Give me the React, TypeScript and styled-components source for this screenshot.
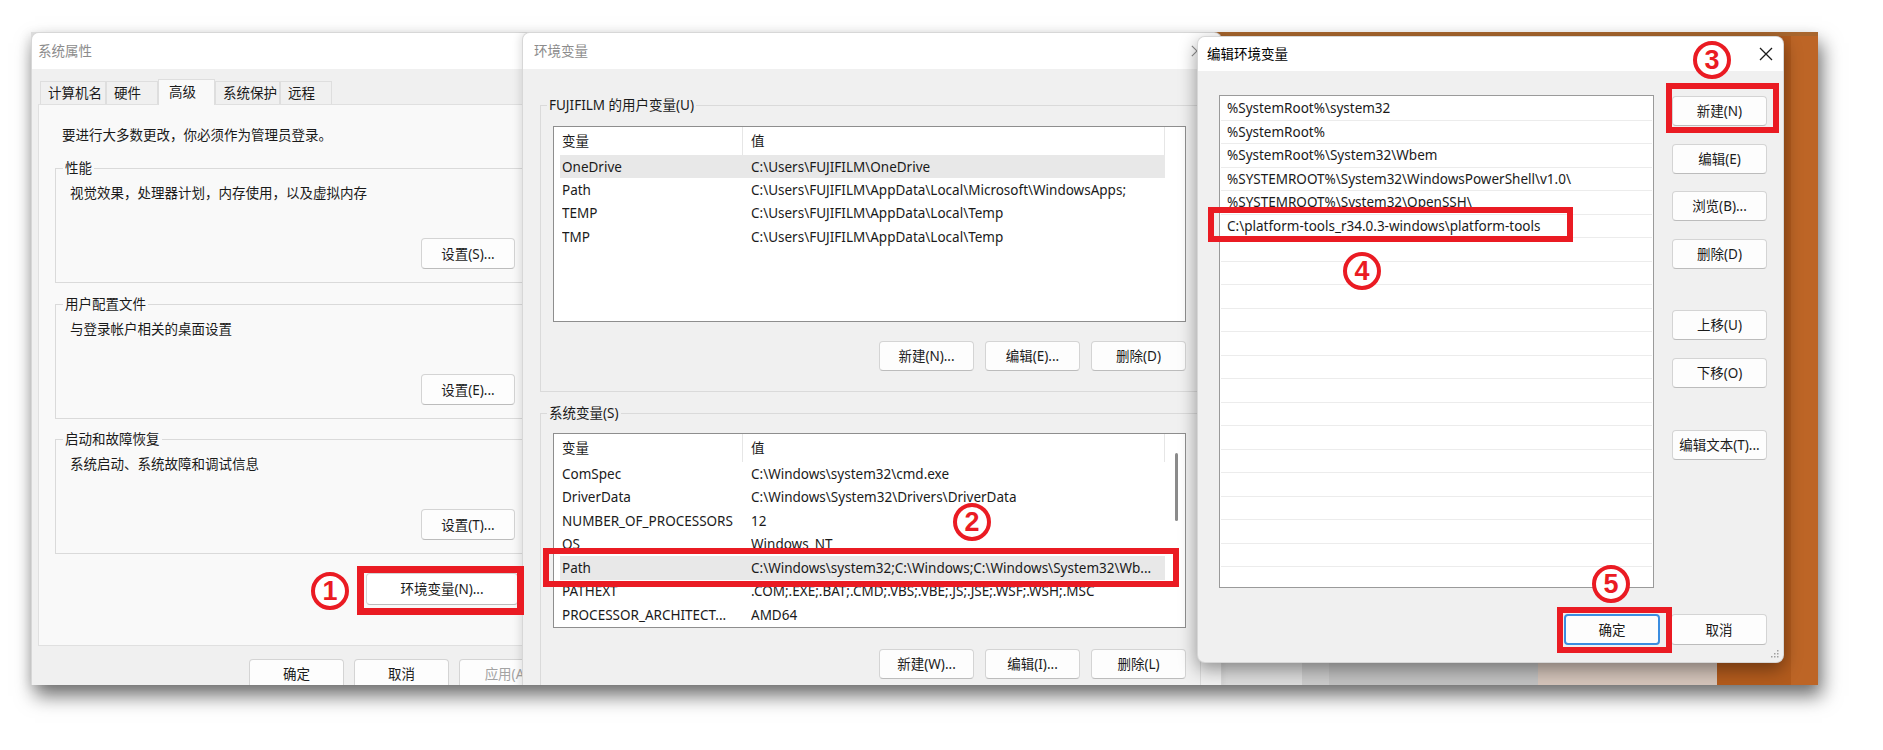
import React from "react";
import styled, { createGlobalStyle } from "styled-components";

const RED = "#ea1b23";

const GlobalStyle = createGlobalStyle`
  *, *::before, *::after { box-sizing: border-box; }
  html, body { margin: 0; padding: 0; background: #ffffff; overflow: hidden; }
  body { font-family: "Noto Sans", "Noto Sans CJK SC", sans-serif; }
`;

const Page = styled.div`
  width: 1883px;
  height: 750px;
  padding: 32px 0 0 31px;
  background: #ffffff;
`;

const Shot = styled.div`
  position: relative;
  width: 1787px;
  height: 653px;
  overflow: hidden;
  font-family: "Noto Sans", "Noto Sans CJK SC", sans-serif;
  font-size: 13.5px;
  line-height: 20px;
  color: #1a1a1a;
  background:
    linear-gradient(180deg, #a8662e 0 4px, transparent 4px) 1166px 0 / 621px 100% no-repeat,
    linear-gradient(90deg, #dcdcdc 0 1271px, #cbcbcb 1271px 1298px, #c1c1c1 1298px 1507px,
      #d4c4ba 1507px 1686px, #b25b1d 1686px 1760px, #bd6526 1760px);
  box-shadow: 4px 11px 18px rgba(0, 0, 0, 0.55), -3px 2px 10px rgba(0, 0, 0, 0.08);
`;

/* windows sit on the desktop canvas */
const Window = styled.div<{ $left: number; $top: number; $width: number; $height: number; $shadow: string }>`
  position: absolute;
  left: ${p => p.$left}px;
  top: ${p => p.$top}px;
  width: ${p => p.$width}px;
  height: ${p => p.$height}px;
  display: flex;
  flex-direction: column;
  background: #f0f0f0;
  border: 1px solid rgba(0, 0, 0, 0.1);
  border-radius: 8px;
  overflow: hidden;
  box-shadow: ${p => p.$shadow};
`;

const TitleBar = styled.div<{ $h: number; $pl: number; $pr?: number; $active?: boolean }>`
  flex: none;
  height: ${p => p.$h}px;
  display: flex;
  align-items: center;
  justify-content: space-between;
  padding: 0 ${p => p.$pr ?? 0}px 0 ${p => p.$pl}px;
  background: #ffffff;
  color: ${p => (p.$active ? "#000000" : "#8c8c8c")};
  font-size: 13.5px;
`;

const Btn = styled.button<{ $w: number; $h?: number; $primary?: boolean; $muted?: boolean; $light?: boolean }>`
  flex: none;
  width: ${p => p.$w}px;
  height: ${p => p.$h ?? 30}px;
  padding: 0;
  font: inherit;
  font-size: 13.5px;
  color: ${p => (p.$muted ? "#a3a3a3" : "#1b1b1b")};
  background: ${p => (p.$light ? "#ffffff" : "#fdfdfd")};
  border: 1px solid #d4d4d4;
  border-bottom-color: #bcbcbc;
  border-radius: 4px;
  ${p => p.$primary && `border: 2px solid #3b8de0;`}
`;

/* ---------- System properties ---------- */
const SysBody = styled.div`
  display: flex;
  flex-direction: column;
  padding: 9px 0 0 6px;
`;

const TabStrip = styled.div`
  display: flex;
  align-items: flex-end;
  height: 26px;
  margin-left: 2px;
`;

const Tab = styled.div<{ $w: number; $selected?: boolean }>`
  width: ${p => p.$w}px;
  height: ${p => (p.$selected ? 26 : 23)}px;
  padding-left: ${p => (p.$selected ? 10 : 7)}px;
  display: flex;
  align-items: ${p => (p.$selected ? "flex-start" : "center")};
  padding-top: ${p => (p.$selected ? 2 : 0)}px;
  background: ${p => (p.$selected ? "#f9f9f9" : "#f0f0f0")};
  border: 1px solid #dedede;
  border-bottom: none;
  margin-bottom: ${p => (p.$selected ? -1 : 0)}px;
  position: relative;
  z-index: ${p => (p.$selected ? 1 : 0)};
`;

const Panel = styled.div`
  width: 528px;
  height: 542px;
  display: flex;
  flex-direction: column;
  padding: 20px 0 0 16px;
  background: #f9f9f9;
  border: 1px solid #e0e0e0;
`;

const Notice = styled.div`
  margin-left: 7px;
  height: 20px;
`;

const Group = styled.fieldset<{ $w: number; $h: number; $mt?: number; $pl?: number }>`
  flex: none;
  width: ${p => p.$w}px;
  height: ${p => p.$h}px;
  margin: ${p => p.$mt ?? 0}px 0 0 0;
  padding: 0 17px 0 ${p => p.$pl ?? 14}px;
  min-width: 0;
  display: flex;
  flex-direction: column;
  border: 1px solid #dadada;
`;

const GroupLabel = styled.legend<{ $ml: number }>`
  padding: 0 2px;
  margin-left: ${p => p.$ml}px;
  line-height: 18px;
  font-size: 13.5px;
`;

const GroupText = styled.div`
  margin-top: 6px;
  height: 20px;
`;

const GroupAction = styled.div`
  margin-top: 35px;
  display: flex;
  justify-content: flex-end;
`;

const EnvButtonRow = styled.div`
  margin: 19px 0 0 311px;
`;

const DialogButtons = styled.div<{ $ml: number; $mt: number }>`
  display: flex;
  gap: 10px;
  margin: ${p => p.$mt}px 0 0 ${p => p.$ml}px;
`;

/* ---------- Environment variables ---------- */
const EnvBody = styled.div`
  display: flex;
  flex-direction: column;
  padding: 27px 0 0 17px;
`;

const ListBox = styled.div<{ $h: number; $mt: number }>`
  flex: none;
  display: flex;
  width: 633px;
  height: ${p => p.$h}px;
  margin-top: ${p => p.$mt}px;
  background: #ffffff;
  border: 1px solid #8e8e8e;
  overflow: hidden;
`;

const ListMain = styled.div`
  width: 611px;
  display: flex;
  flex-direction: column;
`;

const ListHead = styled.div`
  flex: none;
  display: grid;
  grid-template-columns: 189px 422px;
  height: 28px;
`;

const HeadCell = styled.div`
  display: flex;
  align-items: center;
  padding-left: 8px;
  border-right: 1px solid #e6e6e6;
`;

const ListRow = styled.div<{ $h: number; $selected?: boolean }>`
  flex: none;
  display: grid;
  grid-template-columns: 189px 1fr;
  align-items: center;
  height: ${p => p.$h}px;
  margin-left: 6px;
  padding-left: 2px;
  white-space: nowrap;
  overflow: hidden;
  background: ${p => (p.$selected ? "#e8e8e8" : "transparent")};
`;

const Cell = styled.span`
  overflow: hidden;
`;

const ScrollCol = styled.div`
  flex: 1;
  padding: 19px 0 0 10px;
`;

const ScrollThumb = styled.div`
  width: 3px;
  height: 68px;
  background: #8b8b8b;
  border-radius: 2px;
`;

const ListButtons = styled.div<{ $mt: number }>`
  display: flex;
  gap: 11px;
  width: 633px;
  justify-content: flex-end;
  margin-top: ${p => p.$mt}px;
`;

/* ---------- Edit variable ---------- */
const EditBody = styled.div`
  display: flex;
  flex-direction: column;
  padding: 24px 16px 0 21px;
`;

const EditMain = styled.div`
  display: flex;
  gap: 18px;
`;

const PathList = styled.div`
  width: 437px;
  height: 493px;
  padding: 1px 1px 0;
  background: #ffffff;
  border: 1px solid #9a9a9a;
  overflow: hidden;
`;

const PathRow = styled.div`
  height: 23.5px;
  display: flex;
  align-items: center;
  padding-left: 6px;
  border-bottom: 1px solid #ececec;
  white-space: nowrap;
`;

const SideButtons = styled.div`
  display: flex;
  flex-direction: column;
  gap: 17.6px;
  margin-top: 1px;
`;

const Spacer = styled.div<{ $h: number }>`
  height: ${p => p.$h}px;
  margin-top: -17.6px;
`;

const EditFooter = styled.div`
  display: flex;
  justify-content: flex-end;
  gap: 11px;
  margin-top: 26px;
`;

const Grip = styled.svg`
  position: absolute;
  right: 4px;
  bottom: 4px;
`;

/* ---------- annotations ---------- */
const Highlight = styled.div<{ $x: number; $y: number; $w: number; $h: number; $t: number }>`
  position: absolute;
  left: ${p => p.$x}px;
  top: ${p => p.$y}px;
  width: ${p => p.$w}px;
  height: ${p => p.$h}px;
  border: ${p => p.$t}px solid ${RED};
  pointer-events: none;
`;

const Marker = styled.div<{ $x: number; $y: number }>`
  position: absolute;
  left: ${p => p.$x - 19}px;
  top: ${p => p.$y - 19}px;
  width: 38px;
  height: 38px;
  display: flex;
  align-items: center;
  justify-content: center;
  border: 4px solid ${RED};
  border-radius: 50%;
  background: #ffffff;
  color: ${RED};
  font-family: "Liberation Sans", Arial, sans-serif;
  font-weight: 700;
  font-size: 27px;
  line-height: 1;
`;

const CloseX = ({ size, color }: { size: number; color: string }) => (
  <svg width={size} height={size} viewBox="0 0 14 14">
    <path d="M1 1 L13 13 M13 1 L1 13" stroke={color} strokeWidth="1.3" fill="none" />
  </svg>
);

const userVars = [
  ["OneDrive", "C:\\Users\\FUJIFILM\\OneDrive"],
  ["Path", "C:\\Users\\FUJIFILM\\AppData\\Local\\Microsoft\\WindowsApps;"],
  ["TEMP", "C:\\Users\\FUJIFILM\\AppData\\Local\\Temp"],
  ["TMP", "C:\\Users\\FUJIFILM\\AppData\\Local\\Temp"],
];

const sysVars = [
  ["ComSpec", "C:\\Windows\\system32\\cmd.exe"],
  ["DriverData", "C:\\Windows\\System32\\Drivers\\DriverData"],
  ["NUMBER_OF_PROCESSORS", "12"],
  ["OS", "Windows_NT"],
  ["Path", "C:\\Windows\\system32;C:\\Windows;C:\\Windows\\System32\\Wb..."],
  ["PATHEXT", ".COM;.EXE;.BAT;.CMD;.VBS;.VBE;.JS;.JSE;.WSF;.WSH;.MSC"],
  ["PROCESSOR_ARCHITECT...", "AMD64"],
];

const paths = [
  "%SystemRoot%\\system32",
  "%SystemRoot%",
  "%SystemRoot%\\System32\\Wbem",
  "%SYSTEMROOT%\\System32\\WindowsPowerShell\\v1.0\\",
  "%SYSTEMROOT%\\System32\\OpenSSH\\",
  "C:\\platform-tools_r34.0.3-windows\\platform-tools",
];

const groups = [
  { label: "性能", text: "视觉效果，处理器计划，内存使用，以及虚拟内存", btn: "设置(S)...", mt: 14 },
  { label: "用户配置文件", text: "与登录帐户相关的桌面设置", btn: "设置(E)...", mt: 12 },
  { label: "启动和故障恢复", text: "系统启动、系统故障和调试信息", btn: "设置(T)...", mt: 11 },
];

const sideButtons = [
  { label: "新建(N)", gap: 0 },
  { label: "编辑(E)", gap: 0 },
  { label: "浏览(B)...", gap: 0 },
  { label: "删除(D)", gap: 0 },
  { label: "上移(U)", gap: 24 },
  { label: "下移(O)", gap: 0 },
  { label: "编辑文本(T)...", gap: 24 },
];

export default function App() {
  return (
    <Page>
      <GlobalStyle />
      <Shot>
        <Window $left={0} $top={0} $width={540} $height={690} $shadow="none">
          <TitleBar $h={36} $pl={6}>系统属性</TitleBar>
          <SysBody>
            <TabStrip>
              <Tab $w={66}>计算机名</Tab>
              <Tab $w={52}>硬件</Tab>
              <Tab $w={57} $selected>高级</Tab>
              <Tab $w={65}>系统保护</Tab>
              <Tab $w={52}>远程</Tab>
            </TabStrip>
            <Panel>
              <Notice>要进行大多数更改，你必须作为管理员登录。</Notice>
              {groups.map(g => (
                <Group key={g.label} $w={478} $h={124} $mt={g.mt}>
                  <GroupLabel $ml={-7}>{g.label}</GroupLabel>
                  <GroupText>{g.text}</GroupText>
                  <GroupAction>
                    <Btn $w={94} $h={31}>{g.btn}</Btn>
                  </GroupAction>
                </Group>
              ))}
              <EnvButtonRow>
                <Btn $w={152} $h={32} $light>环境变量(N)...</Btn>
              </EnvButtonRow>
            </Panel>
            <DialogButtons $ml={211} $mt={13}>
              <Btn $w={95}>确定</Btn>
              <Btn $w={95}>取消</Btn>
              <Btn $w={95} $muted>应用(A)</Btn>
            </DialogButtons>
          </SysBody>
        </Window>

        <Window $left={491} $top={0} $width={700} $height={700} $shadow="-2px 0 8px rgba(0,0,0,0.12)">
          <TitleBar $h={36} $pl={11} $pr={18}>
            环境变量
            <CloseX size={12} color="#8c8c8c" />
          </TitleBar>
          <EnvBody>
            <Group $w={661} $h={296} $pl={12}>
              <GroupLabel $ml={-6}>FUJIFILM 的用户变量(U)</GroupLabel>
              <ListBox $h={196} $mt={12}>
                <ListMain>
                  <ListHead>
                    <HeadCell>变量</HeadCell>
                    <HeadCell>值</HeadCell>
                  </ListHead>
                  {userVars.map(([k, v], i) => (
                    <ListRow key={k + i} $h={23.3} $selected={i === 0}>
                      <Cell>{k}</Cell>
                      <Cell>{v}</Cell>
                    </ListRow>
                  ))}
                </ListMain>
                <ScrollCol />
              </ListBox>
              <ListButtons $mt={19}>
                <Btn $w={95}>新建(N)...</Btn>
                <Btn $w={95}>编辑(E)...</Btn>
                <Btn $w={95}>删除(D)</Btn>
              </ListButtons>
            </Group>
            <Group $w={661} $h={300} $mt={12} $pl={12}>
              <GroupLabel $ml={-6}>系统变量(S)</GroupLabel>
              <ListBox $h={195} $mt={11}>
                <ListMain>
                  <ListHead>
                    <HeadCell>变量</HeadCell>
                    <HeadCell>值</HeadCell>
                  </ListHead>
                  {sysVars.map(([k, v], i) => (
                    <ListRow key={k + i} $h={23.5} $selected={i === 4}>
                      <Cell>{k}</Cell>
                      <Cell>{v}</Cell>
                    </ListRow>
                  ))}
                </ListMain>
                <ScrollCol>
                  <ScrollThumb />
                </ScrollCol>
              </ListBox>
              <ListButtons $mt={21}>
                <Btn $w={95}>新建(W)...</Btn>
                <Btn $w={95}>编辑(I)...</Btn>
                <Btn $w={95}>删除(L)</Btn>
              </ListButtons>
            </Group>
          </EnvBody>
        </Window>

        <Window $left={1166} $top={4} $width={587} $height={627} $shadow="0 6px 18px rgba(0,0,0,0.4)">
          <TitleBar $h={34} $pl={9} $pr={10} $active>
            编辑环境变量
            <CloseX size={14} color="#1a1a1a" />
          </TitleBar>
          <EditBody>
            <EditMain>
              <PathList>
                {Array.from({ length: 21 }).map((_, i) => (
                  <PathRow key={i}>{paths[i] ?? ""}</PathRow>
                ))}
              </PathList>
              <SideButtons>
                {sideButtons.map(b => (
                  <React.Fragment key={b.label}>
                    {b.gap > 0 && <Spacer $h={b.gap} />}
                    <Btn $w={95}>{b.label}</Btn>
                  </React.Fragment>
                ))}
              </SideButtons>
            </EditMain>
            <EditFooter>
              <Btn $w={96} $h={31} $primary>确定</Btn>
              <Btn $w={96} $h={31}>取消</Btn>
            </EditFooter>
          </EditBody>
          <Grip width="9" height="9" viewBox="0 0 9 9">
            <g fill="#a0a0a0">
              <rect x="7" y="1" width="1.5" height="1.5" />
              <rect x="4" y="4" width="1.5" height="1.5" />
              <rect x="7" y="4" width="1.5" height="1.5" />
              <rect x="1" y="7" width="1.5" height="1.5" />
              <rect x="4" y="7" width="1.5" height="1.5" />
              <rect x="7" y="7" width="1.5" height="1.5" />
            </g>
          </Grip>
        </Window>

        <Highlight $x={326} $y={534} $w={167} $h={49} $t={7} />
        <Highlight $x={512} $y={516} $w={636} $h={39} $t={6} />
        <Highlight $x={1635} $y={51} $w={113} $h={50} $t={6} />
        <Highlight $x={1177} $y={175} $w={365} $h={35} $t={6} />
        <Highlight $x={1526} $y={575} $w={115} $h={46} $t={6} />

        <Marker $x={299} $y={559}>1</Marker>
        <Marker $x={941} $y={490}>2</Marker>
        <Marker $x={1681} $y={28}>3</Marker>
        <Marker $x={1331} $y={239}>4</Marker>
        <Marker $x={1580} $y={552}>5</Marker>
      </Shot>
    </Page>
  );
}
